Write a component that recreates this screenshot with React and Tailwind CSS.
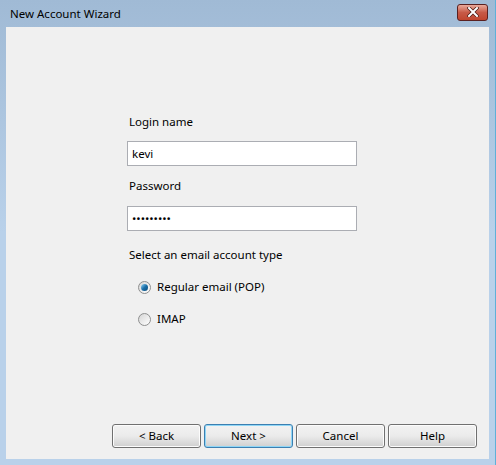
// New Account Wizard — Windows 7 style dialog
const font = { fontFamily: '"Noto Sans", "Open Sans", sans-serif' }

function WinButton({ children, focused }) {
  return (
    <button
      className={`w-[89px] h-[24px] rounded-[3px] border text-[11.5px] text-black bg-gradient-to-b ${
        focused
          ? 'border-[#3c7fb1] from-[#f2f2f2] via-[#ebebeb] to-[#cfcfcf] shadow-[inset_0_0_0_1px_#8fd6f6]'
          : 'border-[#707070] from-[#f2f2f2] via-[#ebebeb] to-[#cfcfcf] shadow-[inset_0_0_0_1px_#fcfcfc]'
      }`}
    >
      {children}
    </button>
  )
}

function Radio({ checked, label }) {
  return (
    <label className="flex items-center h-[16px] gap-[6px] text-[11.5px] text-black">
      <span className="w-[13px] h-[13px] rounded-full border border-[#8e8f8f] bg-gradient-to-br from-[#d6d6d6] to-[#ffffff] flex items-center justify-center">
        {checked && (
          <span className="w-[7px] h-[7px] rounded-full bg-gradient-to-br from-[#8ed8f8] via-[#1a6fa8] to-[#0b4b7a]" />
        )}
      </span>
      {label}
    </label>
  )
}

export default function App() {
  return (
    <div
      className="w-[496px] h-[465px] flex flex-col bg-gradient-to-b from-[#a0bad5] via-[#b9d1ea] to-[#b9d1ea] border-r border-[#5fb0d8]"
      style={font}
    >
      {/* title bar */}
      <div className="h-[27px] flex items-center justify-between pl-[10px] pr-[7px]">
        <span className="text-[11.5px] text-black">New Account Wizard</span>
        <div className="w-[31px] h-[17px] mb-[3px] rounded-[3px] border border-[#5a2020] bg-gradient-to-b from-[#e9a99b] via-[#c75a47] to-[#c0452e] flex items-center justify-center">
          <svg width="12" height="10" viewBox="0 0 12 10">
            <path d="M2 1 L10 9 M10 1 L2 9" stroke="#4a1a14" strokeWidth="3.4" strokeLinecap="square" />
            <path d="M2 1 L10 9 M10 1 L2 9" stroke="#ffffff" strokeWidth="2" strokeLinecap="square" />
          </svg>
        </div>
      </div>

      {/* client area */}
      <div className="flex-1 ml-[6px] mr-[6px] mb-[6px] bg-[#f0f0f0] flex flex-col">
        <div className="flex-1 pl-[121px] pt-[87px] flex flex-col">
          <div className="text-[11.5px] text-black leading-[16px] pl-[2px]">Login name</div>
          <input
            readOnly
            value="kevi"
            className="mt-[11px] w-[230px] h-[25px] border border-[#abadb3] bg-white px-[4px] text-[11.5px] text-black outline-none"
          />
          <div className="mt-[12px] text-[11.5px] text-black leading-[16px] pl-[2px]">Password</div>
          <input
            readOnly
            type="password"
            value="123456789"
            className="mt-[12px] w-[230px] h-[25px] border border-[#abadb3] bg-white px-[4px] text-[11.5px] text-black outline-none"
          />
          <div className="mt-[16px] text-[11.5px] text-black leading-[16px] pl-[2px]">
            Select an email account type
          </div>
          <div className="mt-[16px] pl-[11px] flex flex-col gap-[16px]">
            <Radio checked label="Regular email (POP)" />
            <Radio label="IMAP" />
          </div>
        </div>

        {/* buttons */}
        <div className="flex justify-end gap-[3px] pr-[12px] pb-[11px]">
          <WinButton>&lt; Back</WinButton>
          <WinButton focused>Next &gt;</WinButton>
          <WinButton>Cancel</WinButton>
          <WinButton>Help</WinButton>
        </div>
      </div>
    </div>
  )
}
